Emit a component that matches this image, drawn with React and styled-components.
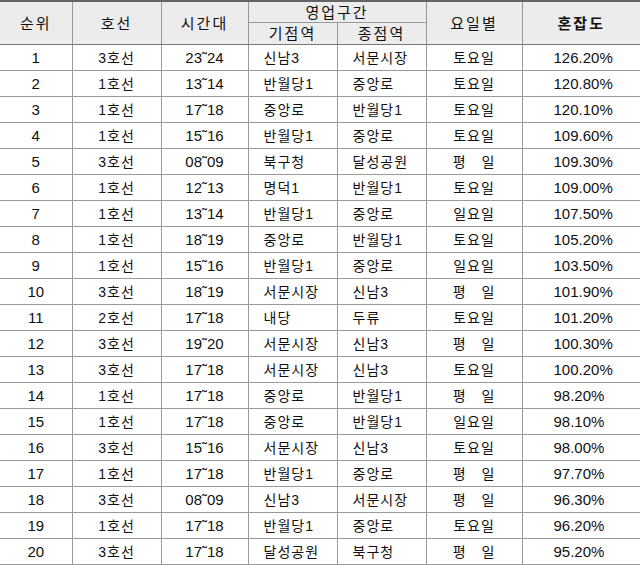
import React from 'react';
import styled, { createGlobalStyle } from 'styled-components';

const GlobalStyle = createGlobalStyle`
  body {
    margin: 0;
    background: #fff;
    font-family: "Liberation Sans", "Noto Sans CJK KR", sans-serif;
  }
`;

const Table = styled.table`
  width: 640px;
  border-collapse: collapse;
  table-layout: fixed;
  border-top: 2px solid #666;
  border-bottom: 1px solid #777;
  color: #111;
`;

const HeadCell = styled.th`
  background: #ececec;
  font-weight: ${(p) => (p.$bold ? 'bold' : 'normal')};
  font-size: 15px;
  letter-spacing: 2px;
  height: ${(p) => (p.$sub ? '21px' : '20px')};
  padding: 0;
  text-align: center;
  border-left: ${(p) => (p.$first ? 'none' : '1px solid #9a9a9a')};
  border-bottom: ${(p) => (p.$bottom ? '1px solid #777' : '1px solid #9a9a9a')};
  line-height: 1;
`;

const Row = styled.tr`
  height: 26px;
`;

const Cell = styled.td`
  padding: 0;
  padding-left: ${(p) => p.$pad || 0}px;
  text-align: ${(p) => p.$align || 'center'};
  border-left: ${(p) => (p.$first ? 'none' : '1px solid #9a9a9a')};
  border-bottom: 1px solid #9a9a9a;
  font-size: ${(p) => (p.$wide ? '14px' : '15px')};
  letter-spacing: ${(p) => (p.$wide ? '1px' : '0')};
  white-space: pre;
  line-height: 1;
`;

const rows = [
  [1, '3호선', '23˜24', '신남3', '서문시장', '토요일', '126.20%'],
  [2, '1호선', '13˜14', '반월당1', '중앙로', '토요일', '120.80%'],
  [3, '1호선', '17˜18', '중앙로', '반월당1', '토요일', '120.10%'],
  [4, '1호선', '15˜16', '반월당1', '중앙로', '토요일', '109.60%'],
  [5, '3호선', '08˜09', '북구청', '달성공원', '평　일', '109.30%'],
  [6, '1호선', '12˜13', '명덕1', '반월당1', '토요일', '109.00%'],
  [7, '1호선', '13˜14', '반월당1', '중앙로', '일요일', '107.50%'],
  [8, '1호선', '18˜19', '중앙로', '반월당1', '토요일', '105.20%'],
  [9, '1호선', '15˜16', '반월당1', '중앙로', '일요일', '103.50%'],
  [10, '3호선', '18˜19', '서문시장', '신남3', '평　일', '101.90%'],
  [11, '2호선', '17˜18', '내당', '두류', '토요일', '101.20%'],
  [12, '3호선', '19˜20', '서문시장', '신남3', '평　일', '100.30%'],
  [13, '3호선', '17˜18', '서문시장', '신남3', '토요일', '100.20%'],
  [14, '1호선', '17˜18', '중앙로', '반월당1', '평　일', '98.20%'],
  [15, '1호선', '17˜18', '중앙로', '반월당1', '일요일', '98.10%'],
  [16, '3호선', '15˜16', '서문시장', '신남3', '토요일', '98.00%'],
  [17, '1호선', '17˜18', '반월당1', '중앙로', '평　일', '97.70%'],
  [18, '3호선', '08˜09', '신남3', '서문시장', '평　일', '96.30%'],
  [19, '1호선', '17˜18', '반월당1', '중앙로', '토요일', '96.20%'],
  [20, '3호선', '17˜18', '달성공원', '북구청', '평　일', '95.20%'],
];

export default function App() {
  return (
    <>
      <GlobalStyle />
      <Table>
        <colgroup>
          <col style={{ width: 72 }} />
          <col style={{ width: 89 }} />
          <col style={{ width: 87 }} />
          <col style={{ width: 89 }} />
          <col style={{ width: 89 }} />
          <col style={{ width: 96 }} />
          <col style={{ width: 118 }} />
        </colgroup>
        <thead>
          <tr>
            <HeadCell rowSpan={2} $first $bottom>순위</HeadCell>
            <HeadCell rowSpan={2} $bottom>호선</HeadCell>
            <HeadCell rowSpan={2} $bottom>시간대</HeadCell>
            <HeadCell colSpan={2}>영업구간</HeadCell>
            <HeadCell rowSpan={2} $bottom>요일별</HeadCell>
            <HeadCell rowSpan={2} $bottom $bold>혼잡도</HeadCell>
          </tr>
          <tr>
            <HeadCell $sub $bottom>기점역</HeadCell>
            <HeadCell $sub $bottom>종점역</HeadCell>
          </tr>
        </thead>
        <tbody>
          {rows.map((r) => (
            <Row key={r[0]}>
              <Cell $first>{r[0]}</Cell>
              <Cell $wide>{r[1]}</Cell>
              <Cell>{r[2]}</Cell>
              <Cell $align="left" $pad={15} $wide>{r[3]}</Cell>
              <Cell $align="left" $pad={15} $wide>{r[4]}</Cell>
              <Cell $wide>{r[5]}</Cell>
              <Cell $align="left" $pad={31}>{r[6]}</Cell>
            </Row>
          ))}
        </tbody>
      </Table>
    </>
  );
}
